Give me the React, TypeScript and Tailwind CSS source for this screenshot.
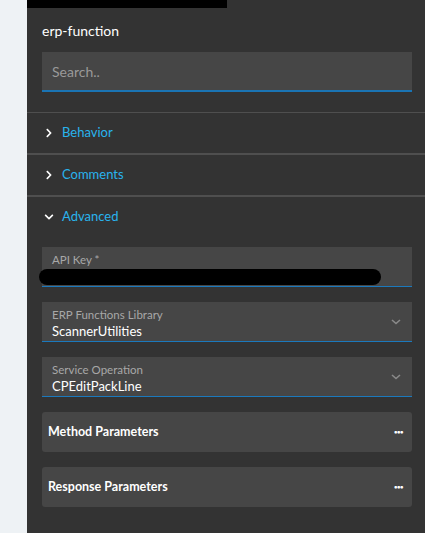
import { FaChevronRight, FaChevronDown } from "react-icons/fa";

const font = { fontFamily: "Lato, 'Noto Sans', sans-serif" };

const Section = ({ title, open }: { title: string; open?: boolean }) => (
  <div className="flex items-center h-[40px] px-[17px] gap-[8px]">
    {open ? (
      <FaChevronDown className="text-white w-[10px] h-[10px]" />
    ) : (
      <FaChevronRight className="text-white w-[10px] h-[10px]" />
    )}
    <span className="text-[13px] text-[#29b3ee]">{title}</span>
  </div>
);

const Chevron = () => (
  <svg width="10" height="6" viewBox="0 0 10 6" className="absolute right-[11px] top-[17px]">
    <path d="M1 1l4 3.5L9 1" stroke="#8a8a8a" strokeWidth="1.6" fill="none" />
  </svg>
);

const SelectField = ({ label, value }: { label: string; value: string }) => (
  <div className="relative h-[40px] bg-[#464646] border-b border-[#1b79bd] px-[10px] pt-[6px]">
    <div className="text-[11.5px] leading-[14px] text-[#a8a8a8]">{label}</div>
    <div className="text-[13px] leading-[19px] text-white">{value}</div>
    <Chevron />
  </div>
);

const ParamRow = ({ label }: { label: string }) => (
  <div className="flex items-center justify-between h-[40px] bg-[#464646] rounded-[3px] pl-[6px] pr-[9px]">
    <span className="text-[12.5px] font-bold text-white">{label}</span>
    <span className="text-[6px] leading-none font-bold text-white tracking-[-0.5px]">•••</span>
  </div>
);

export default function App() {
  return (
    <div className="flex h-[533px] overflow-hidden" style={font}>
      <div className="w-[27px] bg-[#eef2f5]" />
      <div className="flex-1 bg-[#333333] flex flex-col">
        <div className="w-[200px] h-[8px] bg-black" />
        <div className="pl-[15px] pr-[13px]">
          <div className="mt-[14px] text-[14px] leading-[18px] text-white">erp-function</div>
          <div className="mt-[12px] h-[40px] bg-[#464646] border-b-2 border-[#1a74b4] flex items-center px-[10px]">
            <span className="text-[14px] text-[#9a9a9a]">Search..</span>
          </div>
        </div>
        <div className="mt-[20px] h-px bg-[#4f4f4f]" />
        <Section title="Behavior" />
        <div className="h-[2px] bg-[#4f4f4f]" />
        <Section title="Comments" />
        <div className="h-[2px] bg-[#4f4f4f]" />
        <Section title="Advanced" open />
        <div className="pl-[15px] pr-[13px] pt-[10px] flex flex-col gap-[15px]">
          <div className="relative h-[40px] bg-[#464646] border-b border-[#1b79bd] px-[10px] pt-[6px]">
            <div className="text-[11.5px] leading-[14px] text-[#a8a8a8]">API Key *</div>
            <div className="absolute left-[-3px] top-[22px] w-[342px] h-[16px] bg-black rounded-full" />
          </div>
          <SelectField label="ERP Functions Library" value="ScannerUtilities" />
          <SelectField label="Service Operation" value="CPEditPackLine" />
          <ParamRow label="Method Parameters" />
          <ParamRow label="Response Parameters" />
        </div>
      </div>
    </div>
  );
}
